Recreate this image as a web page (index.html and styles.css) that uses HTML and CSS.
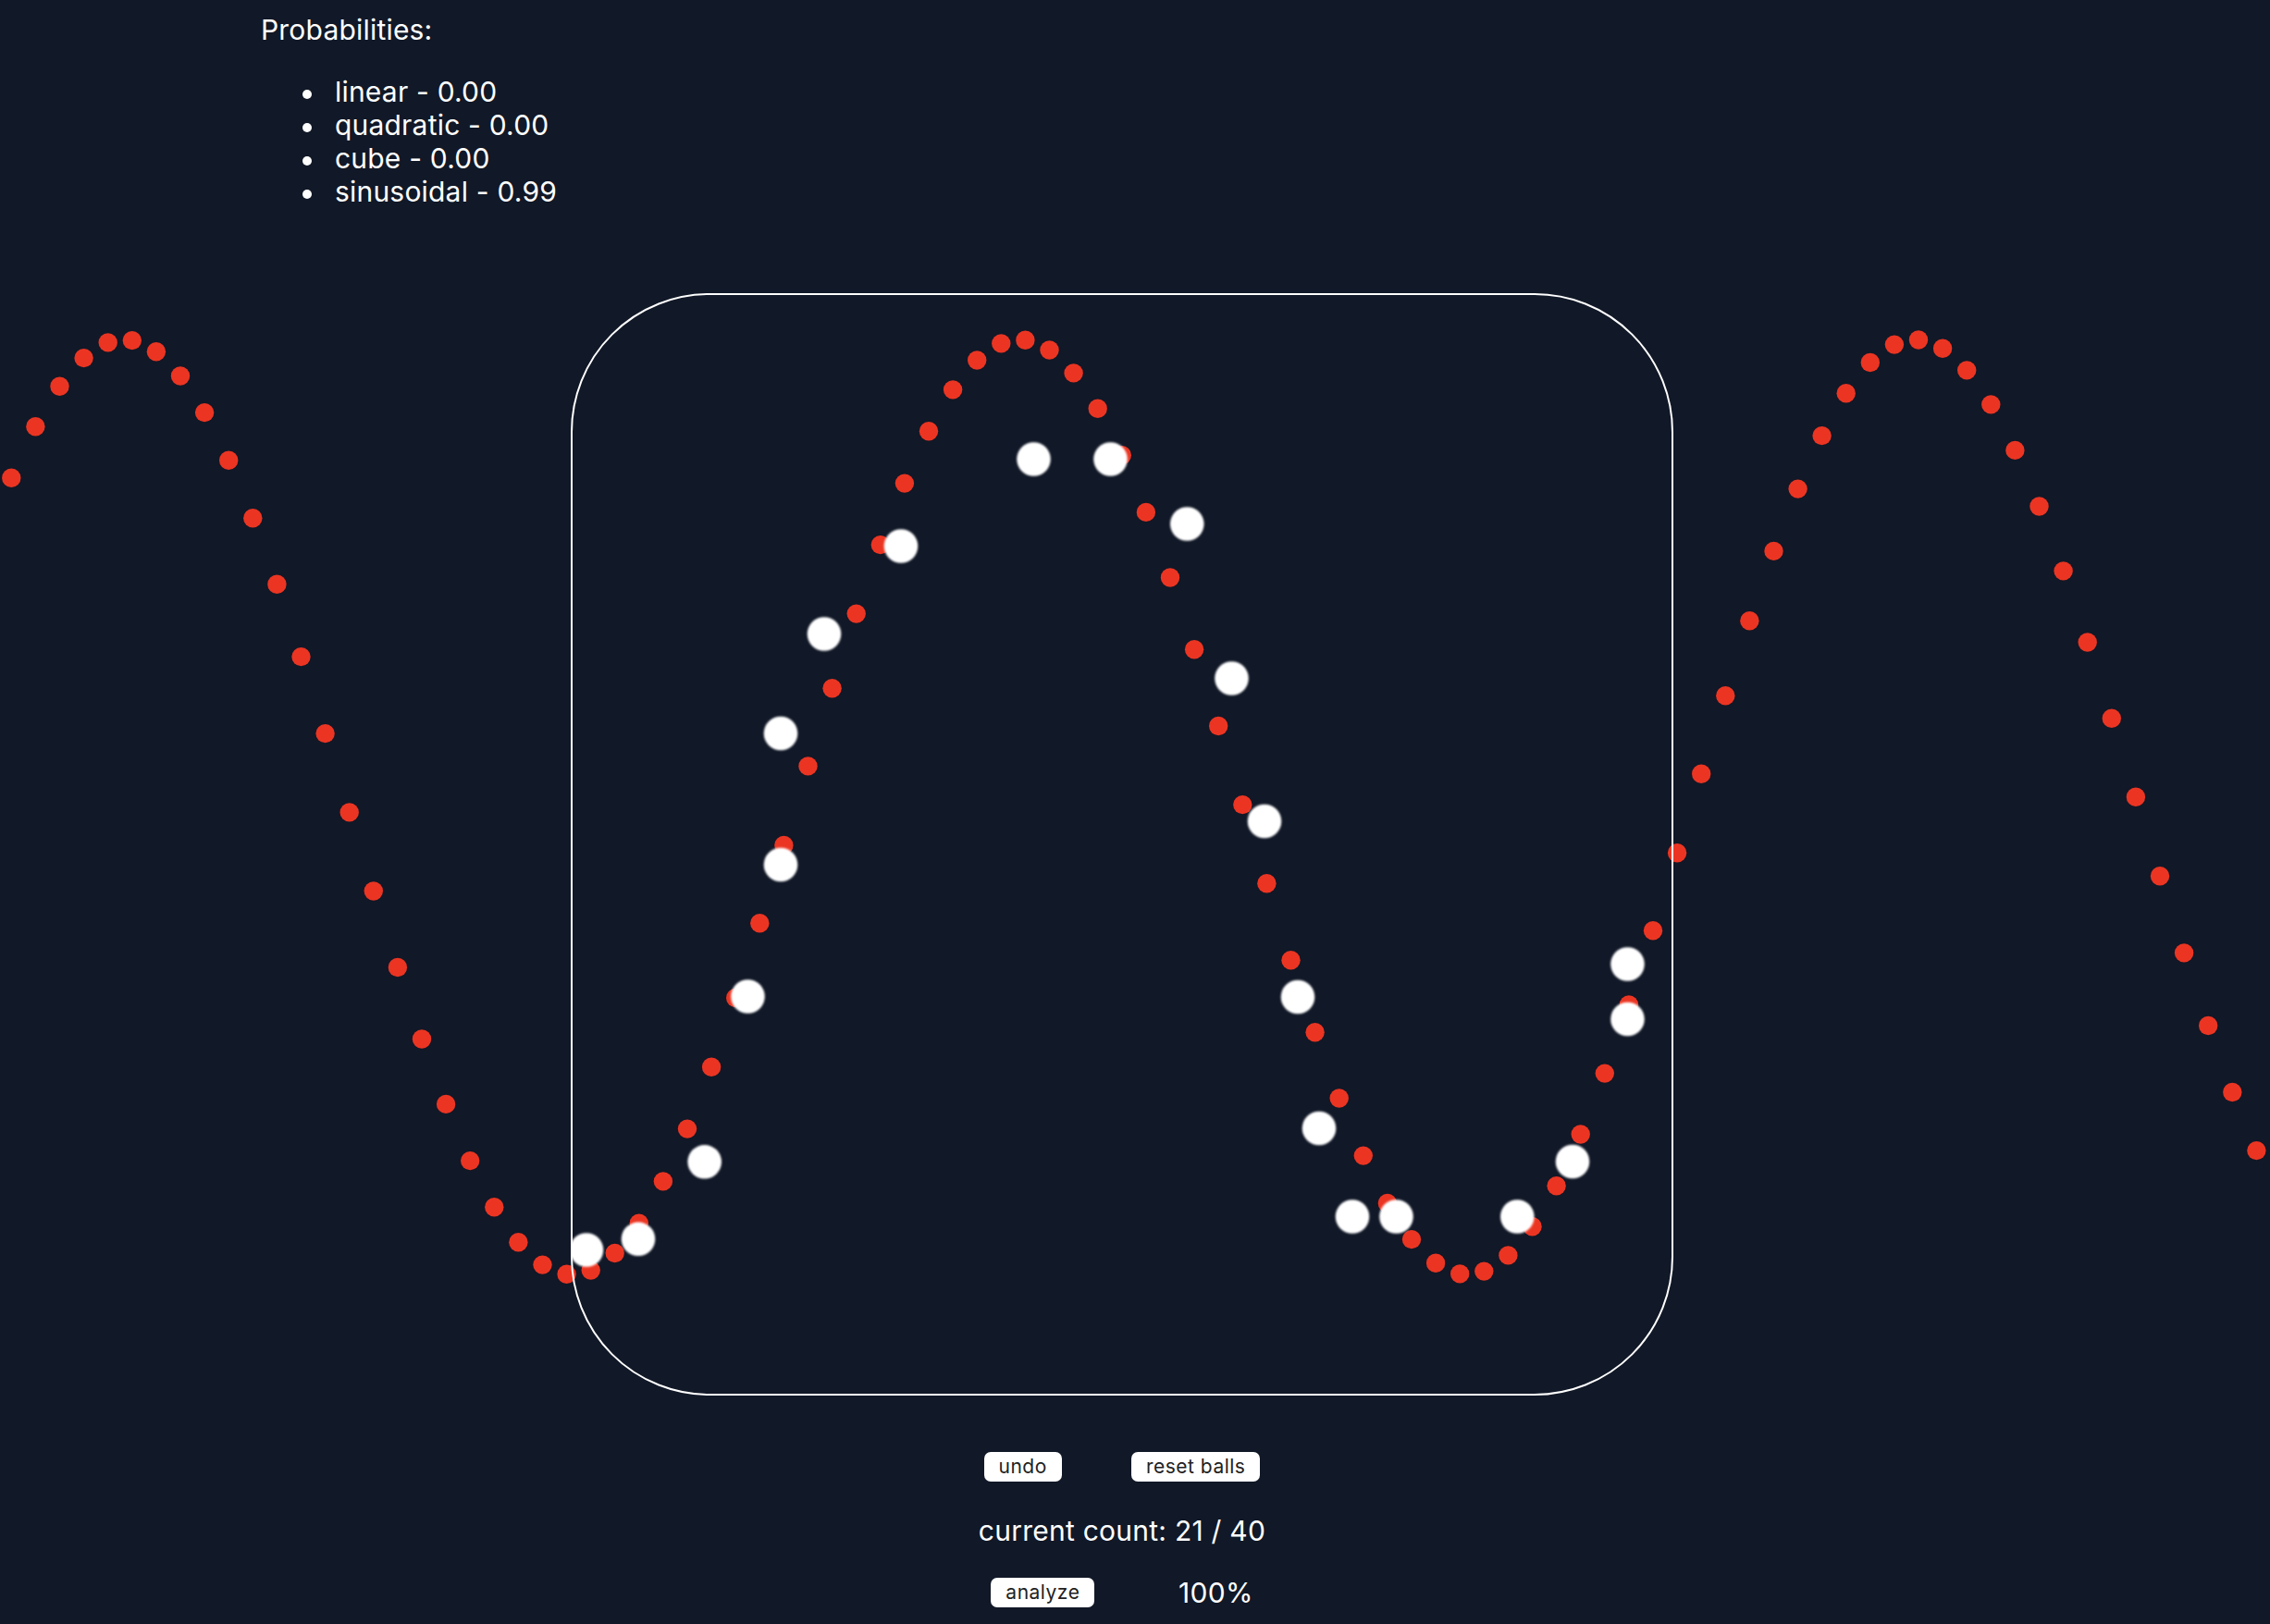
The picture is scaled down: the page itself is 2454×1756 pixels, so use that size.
FILE: index.html
```html
<!DOCTYPE html>
<html lang="en">
<head>
<meta charset="utf-8">
<title>Curve fitting</title>
<link rel="stylesheet" href="styles.css">
</head>
<body>
<div class="page">
  <svg id="sine" class="sine" viewBox="0 0 2454 1756" xmlns="http://www.w3.org/2000/svg">
    <defs>
      <filter id="softRed" x="-50%" y="-50%" width="200%" height="200%">
        <feGaussianBlur stdDeviation="0.7"/>
      </filter>
    </defs>
    <g id="redDots" class="red-dots" filter="url(#softRed)"></g>
  </svg>

  <div class="content">
    <header class="probs">
      <p class="probs-title">Probabilities:</p>
      <ul class="probs-list">
        <li>linear - 0.00</li>
        <li>quadratic - 0.00</li>
        <li>cube - 0.00</li>
        <li>sinusoidal - 0.99</li>
      </ul>
    </header>

    <main class="stage">
      <div class="box">
        <svg class="balls" viewBox="619 319 1188 1188" xmlns="http://www.w3.org/2000/svg">
          <defs>
            <filter id="softWhite" x="-50%" y="-50%" width="200%" height="200%">
              <feGaussianBlur stdDeviation="1.1"/>
            </filter>
          </defs>
          <g class="white-balls" filter="url(#softWhite)">
            <circle cx="634" cy="1351.5" r="18.3"/>
            <circle cx="690" cy="1339.8" r="18.3"/>
            <circle cx="761.7" cy="1256.3" r="18.3"/>
            <circle cx="808.5" cy="1077.5" r="18.3"/>
            <circle cx="844" cy="935" r="18.3"/>
            <circle cx="844" cy="793" r="18.3"/>
            <circle cx="891" cy="685.5" r="18.3"/>
            <circle cx="974" cy="590.5" r="18.3"/>
            <circle cx="1117.5" cy="496.5" r="18.3"/>
            <circle cx="1200.5" cy="496.5" r="18.3"/>
            <circle cx="1283.3" cy="566.5" r="18.3"/>
            <circle cx="1331.5" cy="733.5" r="18.3"/>
            <circle cx="1367" cy="888" r="18.3"/>
            <circle cx="1403" cy="1078" r="18.3"/>
            <circle cx="1426" cy="1220" r="18.3"/>
            <circle cx="1462" cy="1315.5" r="18.3"/>
            <circle cx="1509.5" cy="1315.5" r="18.3"/>
            <circle cx="1640.3" cy="1315.5" r="18.3"/>
            <circle cx="1700" cy="1256" r="18.3"/>
            <circle cx="1759.5" cy="1042.5" r="18.3"/>
            <circle cx="1759.5" cy="1102" r="18.3"/>
          </g>
        </svg>
      </div>

      <div class="controls">
        <div class="row row-actions">
          <button class="btn" type="button">undo</button>
          <button class="btn" type="button">reset balls</button>
        </div>
        <div class="count">current count: 21 / 40</div>
        <div class="row row-analyze">
          <button class="btn" type="button">analyze</button>
          <span class="percent">100%</span>
        </div>
      </div>
    </main>
  </div>
</div>
<script src="script.js"></script>
</body>
</html>
```

FILE: styles.css
```css
html, body {
  margin: 0;
  padding: 0;
  background: #111827;
  color: #ffffff;
  font-family: Inter, "Noto Sans", "Liberation Sans", sans-serif;
  overflow: hidden;
}

.page {
  position: relative;
  width: 2454px;
  height: 1756px;
}

.sine {
  position: absolute;
  top: 0;
  left: 0;
  width: 2454px;
  height: 1756px;
  z-index: 0;
}

.red-dots circle {
  fill: #eb3524;
}

.content {
  position: relative;
  z-index: 1;
}

.probs {
  box-sizing: border-box;
  height: 317px;
  padding: 14px 0 0 282px;
  font-size: 30px;
  letter-spacing: 0.2px;
}

.probs-title {
  margin: 0;
}

.probs-list {
  margin: 31px 0 0;
  padding-left: 80px;
  list-style: none;
}

.probs-list li::before {
  content: "";
  display: inline-block;
  width: 10px;
  height: 10px;
  border-radius: 50%;
  background: #ffffff;
  margin-left: -35px;
  margin-right: 25px;
  vertical-align: middle;
}

.stage {
  width: 1192px;
  margin-left: 617px;
}

.box {
  box-sizing: border-box;
  width: 1192px;
  height: 1192px;
  border: 2px solid #ffffff;
  border-radius: 150px;
  overflow: hidden;
}

.balls {
  display: block;
  width: 1188px;
  height: 1188px;
}

.white-balls circle {
  fill: #ffffff;
}

.controls {
  width: 374px;
  margin: 0 auto;
}

.row {
  display: flex;
  justify-content: space-around;
  align-items: center;
}

.row-actions {
  margin-top: 61px;
  height: 32px;
}

.btn {
  height: 32px;
  padding: 0 16px;
  border: none;
  border-radius: 7px;
  background: #ffffff;
  color: #222222;
  font-family: Inter, "Noto Sans", "Liberation Sans", sans-serif;
  font-size: 21px;
  letter-spacing: 0.5px;
  line-height: 32px;
}

.count {
  margin-top: 35px;
  font-size: 30px;
  letter-spacing: 0.25px;
  text-align: center;
  white-space: nowrap;
}

.row-analyze {
  margin-top: 31px;
  font-size: 30px;
}

.percent {
  font-size: 30px;
  letter-spacing: 0.25px;
}
```

FILE: script.js
```js
(function () {
  var g = document.getElementById('redDots');
  var ns = 'http://www.w3.org/2000/svg';
  var spacing = 26.098;
  var period = 968.15;
  var peak = 133.9;
  var center = 872.7;
  var amp = 505.4;
  for (var k = 0; k < 94; k++) {
    var x = 12.3 + spacing * k;
    var y = center - amp * Math.cos(2 * Math.PI * (x - peak) / period);
    var c = document.createElementNS(ns, 'circle');
    c.setAttribute('cx', x.toFixed(1));
    c.setAttribute('cy', y.toFixed(1));
    c.setAttribute('r', '10.2');
    g.appendChild(c);
  }
})();
```
